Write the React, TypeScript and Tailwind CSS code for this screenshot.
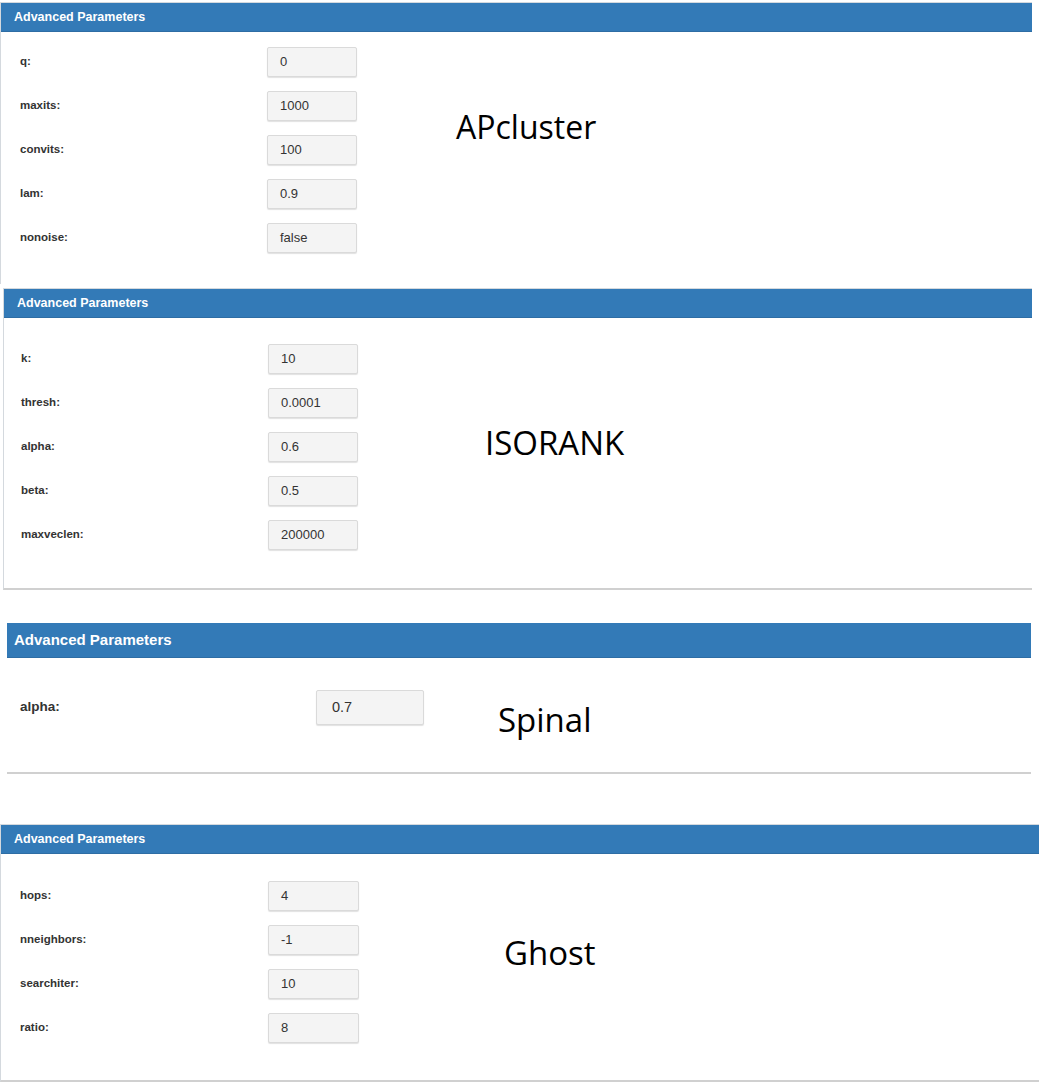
import React from "react";

type Param = { label: string; value: string };

const SANS = "font-['Liberation_Sans',Arial,sans-serif]";

function ParamInput({ value, big = false, wide = false }: { value: string; big?: boolean; wide?: boolean }) {
  if (big) {
    return (
      <div className="flex h-[35px] w-[108px] items-center rounded-[2px] border border-[#dadada] bg-[#f4f4f4] pl-[15px] text-[14.5px] text-[#333] shadow-[0_1px_1px_rgba(0,0,0,0.12)]">
        {value}
      </div>
    );
  }
  return (
    <div
      className={
        wide
          ? "flex h-[30px] w-[91px] items-center rounded-[2px] border border-[#dadada] bg-[#f4f4f4] pl-[12px] text-[13px] text-[#333] shadow-[0_1px_1px_rgba(0,0,0,0.12)]"
          : "flex h-[30px] w-[90px] items-center rounded-[2px] border border-[#dadada] bg-[#f4f4f4] pl-[12px] text-[13px] text-[#333] shadow-[0_1px_1px_rgba(0,0,0,0.12)]"
      }
    >
      {value}
    </div>
  );
}

function Header({ big = false }: { big?: boolean }) {
  return (
    <div
      className={
        big
          ? "flex h-[35px] items-center border-b border-[#2e6da4] bg-[#337ab7] pl-[7px] text-[15px] font-bold text-white"
          : "flex h-[29px] items-center border-b border-[#2e6da4] bg-[#337ab7] pl-[13px] text-[12.5px] font-bold text-white"
      }
    >
      Advanced Parameters
    </div>
  );
}

export default function App() {
  const apcluster: Param[] = [
    { label: "q:", value: "0" },
    { label: "maxits:", value: "1000" },
    { label: "convits:", value: "100" },
    { label: "lam:", value: "0.9" },
    { label: "nonoise:", value: "false" },
  ];
  const isorank: Param[] = [
    { label: "k:", value: "10" },
    { label: "thresh:", value: "0.0001" },
    { label: "alpha:", value: "0.6" },
    { label: "beta:", value: "0.5" },
    { label: "maxveclen:", value: "200000" },
  ];
  const ghost: Param[] = [
    { label: "hops:", value: "4" },
    { label: "nneighbors:", value: "-1" },
    { label: "searchiter:", value: "10" },
    { label: "ratio:", value: "8" },
  ];

  const bigText = "font-['Open_Sans','Lato',sans-serif] leading-none text-black";

  return (
    <div className={`h-[1084px] w-[1039px] overflow-hidden bg-white ${SANS}`}>
      {/* APcluster */}
      <div className="mt-[2px] w-[1032px] border-t border-l border-[#d4d9de]">
        <Header />
        <div className="flex h-[252px]">
          <div className="flex w-[455px] flex-col gap-[14px] pt-[15px] pl-[19px]">
            {apcluster.map((p) => (
              <div key={p.label} className="flex h-[30px] items-center">
                <span className="w-[247px] text-[11.5px] font-bold text-[#333]">{p.label}</span>
                <ParamInput value={p.value} />
              </div>
            ))}
          </div>
          <div className={`pt-[79px] text-[32px] ${bigText}`}>APcluster</div>
        </div>
      </div>

      {/* ISORANK */}
      <div className="mt-[4px] ml-[3px] w-[1029px] border-t border-l border-b-2 border-[#d4d9de] border-b-[#d0d0d0]">
        <Header />
        <div className="flex h-[270px]">
          <div className="flex w-[481px] flex-col gap-[14px] pt-[26px] pl-[17px]">
            {isorank.map((p) => (
              <div key={p.label} className="flex h-[30px] items-center">
                <span className="w-[247px] text-[11.5px] font-bold text-[#333]">{p.label}</span>
                <ParamInput value={p.value} />
              </div>
            ))}
          </div>
          <div className={`pt-[108px] text-[33px] ${bigText}`}>ISORANK</div>
        </div>
      </div>

      {/* Spinal */}
      <div className="mt-[33px] ml-[7px] w-[1024px] border-b-2 border-[#d0d0d0]">
        <Header big />
        <div className="flex h-[114px]">
          <div className="flex w-[491px] pt-[32px] pl-[13px]">
            <div className="flex h-[35px] items-center">
              <span className="w-[296px] text-[13.5px] font-bold text-[#333]">alpha:</span>
              <ParamInput value="0.7" big />
            </div>
          </div>
          <div className={`pt-[45px] text-[33px] ${bigText}`}>Spinal</div>
        </div>
      </div>

      {/* Ghost */}
      <div className="mt-[50px] w-[1039px] border-t border-l border-b-2 border-[#d4d9de] border-b-[#d0d0d0]">
        <Header />
        <div className="flex h-[226px]">
          <div className="flex w-[503px] flex-col gap-[14px] pt-[27px] pl-[19px]">
            {ghost.map((p) => (
              <div key={p.label} className="flex h-[30px] items-center">
                <span className="w-[248px] text-[11.5px] font-bold text-[#333]">{p.label}</span>
                <ParamInput value={p.value} wide />
              </div>
            ))}
          </div>
          <div className={`pt-[82px] text-[33px] ${bigText}`}>Ghost</div>
        </div>
      </div>
    </div>
  );
}
